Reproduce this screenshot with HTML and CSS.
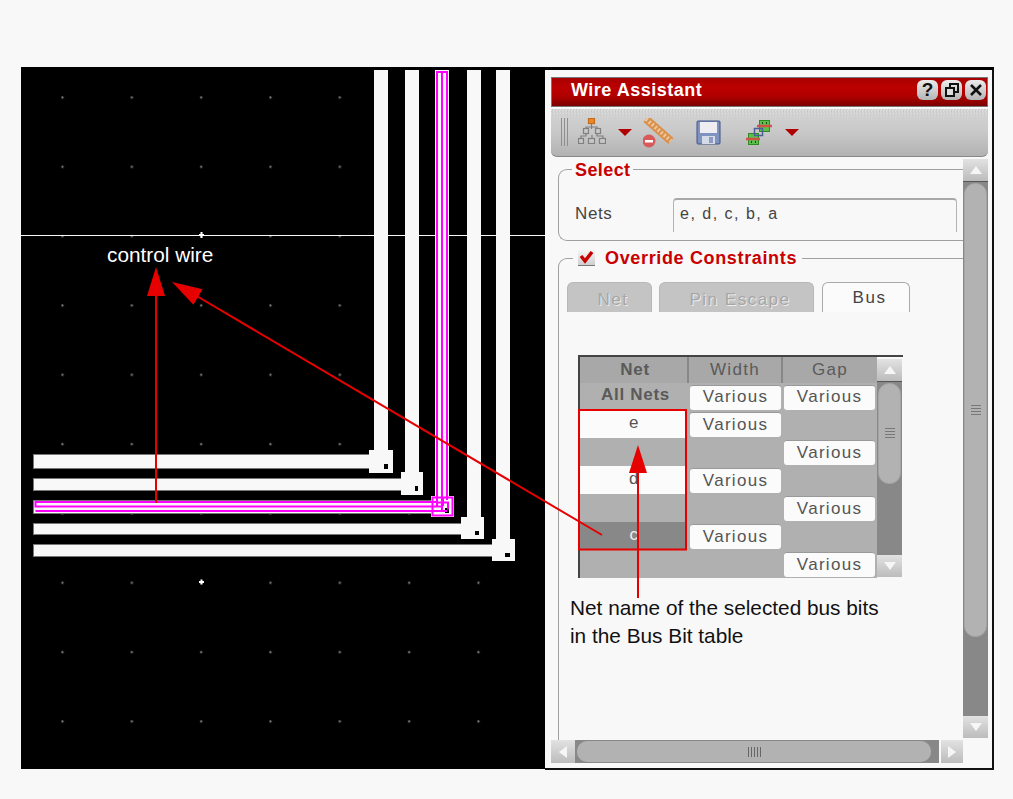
FILE: index.html
```html
<!DOCTYPE html>
<html lang="en">
<head>
  <meta charset="UTF-8" />
  <title>Wire Assistant</title>
  <link rel="stylesheet" href="styles.css">
</head>
<body>
  <div class="figure">
    <div class="canvas">
      <svg width="524" height="699" viewBox="21 70 524 699">
        <defs>
          <pattern id="grid" x="27.5" y="62.5" width="69.33" height="69.33" patternUnits="userSpaceOnUse">
            <rect x="34" y="34" width="2" height="2" fill="#8a8a8a"/>
          </pattern>
        </defs>
        <rect x="21" y="70" width="524" height="699" fill="url(#grid)"/>
        <rect x="21" y="235" width="524" height="1" fill="#f8f8f8"/>
        <path d="M199 235h5M201.500 232v6M199 582h5M201.500 579.500v5" stroke="#fff" stroke-width="2"/>

        <g fill="#f8f8f8" stroke="#777" stroke-width="1">
          <rect x="33.500" y="454.500" width="336" height="14"/>
          <rect x="33.500" y="478.500" width="368" height="12"/>
          <rect x="33.500" y="500.500" width="400" height="13"/>
          <rect x="33.500" y="523.500" width="430" height="11"/>
          <rect x="33.500" y="544.500" width="460" height="12"/>
        </g>
        <g fill="#f8f8f8">
          <rect x="374" y="70" width="14" height="382"/>
          <rect x="405" y="70" width="14" height="404"/>
          <rect x="435" y="70" width="14" height="428"/>
          <rect x="467" y="70" width="14" height="449"/>
          <rect x="496" y="70" width="14" height="471"/>
          <rect x="369" y="450" width="24" height="23"/>
          <rect x="401" y="472" width="22" height="23"/>
          <rect x="431" y="496" width="23" height="21"/>
          <rect x="461" y="517" width="23" height="22"/>
          <rect x="492" y="539" width="23" height="22"/>
        </g>
        <g fill="#000">
          <rect x="384" y="464" width="4" height="5"/>
          <rect x="415" y="486" width="3" height="5"/>
          <rect x="445" y="508" width="4" height="5"/>
          <rect x="475" y="531" width="4" height="4"/>
          <rect x="505" y="553" width="5" height="4"/>
        </g>
        <g fill="none" stroke="#ff00ff" stroke-width="2">
          <path d="M443 506.500H35.500V502H437M35.500 511H447"/>
          <path d="M437 71v435M442 71v439M447 71v429"/>
          <path d="M436 72h12"/>
          <rect x="432.500" y="497.500" width="20" height="18"/>
          <path d="M437 502.500h11v7M443 498v8"/>
        </g>
      </svg>
    </div>

    <div class="window">
      <div class="titlebar">
        <span class="title">Wire Assistant</span>
        <div class="title-buttons">
          <span class="title-btn">?</span>
          <span class="title-btn">
            <svg width="16" height="16" viewBox="0 0 16 16" fill="none" stroke="#111" stroke-width="2"><rect x="6" y="2" width="8" height="8"/><rect x="2" y="6" width="8" height="8" fill="#ddd"/></svg>
          </span>
          <span class="title-btn">
            <svg width="14" height="14" viewBox="0 0 14 14" stroke="#111" stroke-width="2.500"><path d="M2 2l10 10M12 2L2 12"/></svg>
          </span>
        </div>
      </div>

      <div class="toolbar">
        <svg class="ic-grip" width="8" height="28" viewBox="0 0 8 28" stroke="#8f8f8f" stroke-width="1"><path d="M.5 0v28M3.500 0v28M6.500 0v28"/></svg>
        <svg class="ic-tree" width="28" height="26" viewBox="0 0 28 26" fill="#c8c8c8" stroke="#808080" stroke-width="1.200">
          <path d="M13.500 6v5M8 13V9h11v4M3 20v-2h5v-2M14 20v-3M25 20v-2h-6v-2" fill="none"/>
          <rect x="10.500" y=".5" width="6" height="5" fill="#e88a2c" stroke="#c86a1c"/>
          <rect x="5.500" y="10.500" width="5" height="5"/>
          <rect x="17.500" y="10.500" width="5" height="5"/>
          <rect x=".5" y="20.500" width="5" height="5"/>
          <rect x="10.500" y="20.500" width="6" height="5"/>
          <rect x="21.500" y="20.500" width="6" height="5"/>
        </svg>
        <span class="caret caret-a"></span>
        <svg class="ic-ruler" width="30" height="30" viewBox="0 0 30 30">
          <path d="M3 1l25 22" stroke="#d9914e" stroke-width="8"/>
          <path d="M3 1l25 22" stroke="#efc79a" stroke-width="4" stroke-dasharray="2 2"/>
          <circle cx="6" cy="23" r="6.500" fill="#d85a5a"/>
          <rect x="2" y="22" width="8" height="2.500" fill="#fff"/>
        </svg>
        <svg class="ic-save" width="25" height="25" viewBox="0 0 25 25">
          <rect x="1" y="1" width="23" height="23" rx="1" fill="#7f93c0" stroke="#3f5288"/>
          <rect x="4" y="2" width="17" height="11" fill="#eeeef2"/>
          <rect x="6" y="16" width="13" height="8" fill="#d4dae8"/>
          <rect x="13" y="17" width="4" height="6" fill="#8c9cc0"/>
        </svg>
        <svg class="ic-vias" width="26" height="25" viewBox="0 0 26 25">
          <rect x="13.500" y=".5" width="10" height="11" fill="#5cc04a" stroke="#2e8a22"/>
          <rect x="2.500" y="13.500" width="10" height="11" fill="#5cc04a" stroke="#2e8a22"/>
          <rect x="8.500" y="8.500" width="8" height="7" fill="none" stroke="#4a5f9a" stroke-width="1.500"/>
          <path d="M11 6h15M0 19h14" stroke="#d0504a" stroke-width="2.500"/>
          <path d="M16 3h1M20 3h1M5 22h1M9 22h1" stroke="#174d10" stroke-width="2"/>
        </svg>
        <span class="caret caret-b"></span>
      </div>

      <div class="panes">
        <div class="content">
          <fieldset class="group group-select">
            <legend class="legend-select">Select</legend>
            <div class="nets-row">
              <label class="nets-label">Nets</label>
              <div class="nets-input">e, d, c, b, a</div>
            </div>
          </fieldset>

          <fieldset class="group group-override">
            <legend class="legend-override">
              <span class="check">
                <svg width="15" height="13" viewBox="0 0 15 13" fill="none" stroke="#c80000" stroke-width="3.500"><path d="M2 5l4 5 7-9"/></svg>
              </span>
              Override Constraints
            </legend>
            <div class="tabs">
              <span class="tab tab-net">Net</span>
              <span class="tab tab-pin">Pin Escape</span>
              <span class="tab tab-bus">Bus</span>
            </div>

            <div class="bus-table">
              <div class="bus-grid">
                <div class="th th-net">Net</div>
                <div class="th">Width</div>
                <div class="th th-last">Gap</div>

                <div class="cell-all">All Nets</div>
                <div class="cell"><span class="val val-first">Various</span></div>
                <div class="cell"><span class="val val-first">Various</span></div>

                <div class="cell-name">e</div>
                <div class="cell"><span class="val">Various</span></div>
                <div class="cell"></div>

                <div class="cell-name cell-off"></div>
                <div class="cell"></div>
                <div class="cell"><span class="val">Various</span></div>

                <div class="cell-name">d</div>
                <div class="cell"><span class="val">Various</span></div>
                <div class="cell"></div>

                <div class="cell-name cell-off"></div>
                <div class="cell"></div>
                <div class="cell"><span class="val">Various</span></div>

                <div class="cell-name cell-sel">c</div>
                <div class="cell"><span class="val">Various</span></div>
                <div class="cell"></div>

                <div class="cell-name cell-off"></div>
                <div class="cell"></div>
                <div class="cell"><span class="val">Various</span></div>
              </div>
              <div class="vscroll vscroll-table">
                <span class="arrow arrow-up"></span>
                <div class="track"><div class="thumb thumb-table"><i class="grip-h"></i></div></div>
                <span class="arrow arrow-down"></span>
              </div>
            </div>
          </fieldset>
        </div>

        <div class="vscroll vscroll-main">
          <span class="arrow arrow-up"></span>
          <div class="track"><div class="thumb thumb-main"><i class="grip-h"></i></div></div>
          <span class="arrow arrow-down"></span>
        </div>

        <div class="hscroll">
          <span class="arrow arrow-left"></span>
          <div class="htrack"><div class="hthumb"><i class="grip-v"></i></div></div>
          <span class="arrow arrow-right"></span>
        </div>
      </div>
    </div>
  </div>

  <!-- callouts drawn over the figure -->
  <svg class="marks" width="1013" height="799" viewBox="0 0 1013 799">
    <rect x="579" y="410" width="107" height="139.500" fill="none" stroke="#e60000" stroke-width="2"/>
    <path d="M156 503V290M638 598V470M602 535L195 295" stroke="#e60000" stroke-width="2" fill="none"/>
    <path d="M156 267l9 29h-18zM638 445l9 28h-18zM172 282l30.600 7.200-9.200 15.600z" fill="#e60000"/>
  </svg>
  <div class="note note-wire">control wire</div>
  <div class="note note-bits">Net name of the selected bus bits<br>in the Bus Bit table</div>
</body>
</html>
```

FILE: styles.css
```css
html, body {
  margin: 0;
  padding: 0;
}

body {
  position: relative;
  width: 1013px;
  height: 799px;
  overflow: hidden;
  background: #f8f8f8;
  font-family: "Liberation Sans", Arial, sans-serif;
  color: #444;
}

.figure {
  display: flex;
  width: 973px;
  height: 699px;
  margin: 0 0 0 21px;
  position: relative;
  top: 67px;
  border-top: 3px solid #000;
}

.canvas {
  width: 524px;
  height: 699px;
  background: #000;
  flex: none;
}

.canvas svg {
  display: block;
}

.window {
  width: 449px;
  height: 700px;
  box-sizing: border-box;
  padding: 7px 4px 0 6px;
  border-right: 2px solid #111;
  border-bottom: 2px solid #111;
  background: #f8f8f8;
}

/* title bar */
.titlebar {
  display: flex;
  align-items: center;
  justify-content: space-between;
  height: 30px;
  box-sizing: border-box;
  padding: 0 1px 0 19px;
  border: 1px solid #777;
  background: linear-gradient(#a80000, #bc0000 35%, #b00000 65%, #7a0000);
}

.title {
  margin-top: -3px;
  color: #fff;
  font-weight: bold;
  font-size: 18px;
  letter-spacing: 0.5px;
}

.title-buttons {
  display: flex;
  gap: 3px;
}

.title-btn {
  display: flex;
  align-items: center;
  justify-content: center;
  width: 21px;
  height: 20px;
  margin-top: -4px;
  border-radius: 6px;
  background: linear-gradient(#ececec, #b4b4b4);
  color: #111;
  font-size: 19px;
  font-weight: bold;
}

/* toolbar */
.toolbar {
  display: flex;
  align-items: flex-start;
  height: 48px;
  margin-top: 2px;
  box-sizing: border-box;
  padding: 9px 0 0 10px;
  background:
    linear-gradient(rgba(214, 214, 214, 0.45), #cecece 12px, #c8c8c8 50%, #b2b2b2),
    repeating-conic-gradient(#c4c4c4 0 25%, #e8e8e8 0 50%) 0 0 / 3px 3px;
  border-bottom: 1px solid #888;
  border-radius: 0 0 6px 6px;
}

.toolbar svg {
  flex: none;
}

.ic-tree { margin-left: 9px; }
.ic-ruler { margin-left: 11px; }
.ic-save { margin-left: 23px; margin-top: 2px; }
.ic-vias { margin-left: 25px; margin-top: 2px; }

.caret {
  flex: none;
  width: 0;
  height: 0;
  margin-top: 11px;
  border-left: 7px solid transparent;
  border-right: 7px solid transparent;
  border-top: 7px solid #b00000;
}

.caret-a { margin-left: 12px; }
.caret-b { margin-left: 13px; }

/* panes: scrolled content, vertical bar, horizontal bar */
.panes {
  display: grid;
  grid-template-columns: 412px 25px;
  grid-template-rows: 581px 23px;
  margin-top: 2px;
}

.content {
  padding-left: 7px;
  overflow: hidden;
}

.group {
  margin: 0;
  min-width: 0;
  border: 1px solid #a0a0a0;
  border-right: none;
}

.group-select {
  padding: 0 0 8px 16px;
  border-radius: 9px 0 0 9px;
}

.group-override {
  height: 492px;
  box-sizing: border-box;
  margin-top: 7px;
  padding: 0 0 0 8px;
  border-bottom: none;
  border-radius: 9px 0 0 0;
}

legend {
  height: 20px;
  line-height: 23px;
  color: #c80000;
  font-size: 18px;
  font-weight: bold;
  letter-spacing: 0.4px;
}

.legend-select {
  margin-left: -3px;
  padding: 0 3px;
}

.legend-override {
  display: flex;
  align-items: center;
  margin-left: 6px;
  padding: 0 5px;
  letter-spacing: 0.65px;
}

.check {
  display: flex;
  align-items: center;
  justify-content: center;
  width: 17px;
  height: 15px;
  margin-right: 10px;
  background: linear-gradient(#f6f6f6, #cfcfcf);
  border-bottom: 1px solid #777;
}

.nets-row {
  display: flex;
  align-items: center;
  margin-top: 19px;
  font-size: 17px;
  letter-spacing: 0.6px;
}

.nets-label {
  width: 98px;
  margin-top: -2px;
}

.nets-input {
  width: 284px;
  height: 34px;
  box-sizing: border-box;
  padding: 0 0 0 6px;
  line-height: 28px;
  border: 1px solid #b4b4b4;
  border-top: 2px solid #a8a8a8;
  border-bottom: none;
  border-radius: 4px 4px 0 0;
  font-size: 16px;
  letter-spacing: 1.5px;
}

/* tabs */
.tabs {
  display: flex;
  gap: 7px;
  margin-top: 14px;
  font-size: 17px;
  letter-spacing: 1.5px;
}

.tab {
  height: 30px;
  box-sizing: border-box;
  padding-left: 7px;
  line-height: 34px;
  text-align: center;
  border-radius: 6px 6px 0 0;
  background: #c4c4c4;
  color: #a6a6a6;
  text-shadow: 1px 1px 0 #eee;
  border: 1px solid #b8b8b8;
  border-bottom: none;
}

.tab-net { width: 85px; }
.tab-pin { width: 155px; }

.tab-bus {
  width: 88px;
  margin-left: 1px;
  background: #fbfbfb;
  color: #444;
  text-shadow: none;
  border-color: #aaa;
  line-height: 30px;
}

/* bus bit table */
.bus-table {
  display: flex;
  width: 325px;
  height: 223px;
  box-sizing: border-box;
  margin: 43px 0 0 11px;
  border-top: 2px solid #444;
  border-left: 2px solid #444;
  background: #b0b0b0;
  font-size: 17px;
  letter-spacing: 1.3px;
}

.bus-grid {
  display: grid;
  grid-template-columns: 109px 94px 94px;
  grid-template-rows: 26px 27px repeat(6, 28px);
  flex: none;
}

.th {
  line-height: 25px;
  text-align: center;
  border-right: 2px solid #888;
  background: #a8a8a8;
  color: #5a5a5a;
}

.th-net {
  font-weight: bold;
  letter-spacing: 0.7px;
  padding-left: 3px;
}

.th-last {
  border-right: none;
}

.cell-all {
  font-weight: bold;
  letter-spacing: 0.7px;
  color: #5a5a5a;
  line-height: 24px;
  text-align: center;
  padding-left: 2px;
}

.cell {
  display: flex;
  padding: 1px 2px 1px 1px;
}

.val {
  flex: 1;
  height: 25px;
  line-height: 24px;
  margin-top: 1px;
  text-align: center;
  background: #fbfbfb;
  border-top: 1px solid #999;
  border-radius: 3px;
  box-sizing: border-box;
  color: #555;
}

.val-first {
  line-height: 22px;
}

.cell-name {
  margin-right: 2px;
  line-height: 26px;
  padding-left: 2px;
  text-align: center;
  background: #fbfbfb;
  color: #555;
}

.cell-off {
  background: #b0b0b0;
}

.cell-sel {
  background: #888;
  color: #eee;
}

/* scroll bars */
.vscroll {
  display: flex;
  flex-direction: column;
  background: #f8f8f8;
}

.vscroll-main {
  height: 579px;
}

.vscroll-table {
  width: 26px;
  padding: 2px 1px 1px 0;
  box-sizing: border-box;
  height: 221px;
}

.track {
  flex: 1;
  background: #888;
  padding: 1px 1px;
  border-top: 1px solid #555;
}

.thumb {
  display: flex;
  align-items: center;
  justify-content: center;
  box-sizing: border-box;
  background: #b2b2b2;
  border-radius: 11px;
  border: 1px solid #a4a4a4;
}

.thumb-main { height: 454px; }
.thumb-table { height: 101px; }

.arrow {
  display: block;
  flex: none;
  height: 22px;
  background: linear-gradient(#e2e2e2, #bcbcbc);
  position: relative;
}

.arrow::after {
  content: "";
  position: absolute;
  top: 50%;
  left: 50%;
  width: 0;
  height: 0;
  transform: translate(-50%, -50%);
}

.arrow-up::after {
  border-left: 6px solid transparent;
  border-right: 6px solid transparent;
  border-bottom: 8px solid #f6f6f6;
}

.arrow-down::after {
  border-left: 6px solid transparent;
  border-right: 6px solid transparent;
  border-top: 8px solid #f6f6f6;
}

.arrow-left::after {
  border-top: 6px solid transparent;
  border-bottom: 6px solid transparent;
  border-right: 8px solid #f6f6f6;
}

.arrow-right::after {
  border-top: 6px solid transparent;
  border-bottom: 6px solid transparent;
  border-left: 8px solid #f6f6f6;
}

.grip-h {
  display: block;
  width: 10px;
  height: 11px;
  background: repeating-linear-gradient(#777 0 1px, transparent 1px 3px);
}

.grip-v {
  display: block;
  width: 13px;
  height: 10px;
  background: repeating-linear-gradient(90deg, #666 0 1px, transparent 1px 3px);
}

.hscroll {
  display: flex;
  grid-column: 1 / 2;
  height: 23px;
}

.hscroll .arrow {
  width: 24px;
  height: 23px;
}

.hscroll .arrow-right {
  width: 22px;
  margin-left: 2px;
}

.htrack {
  flex: 1;
  padding: 1px 8px 1px 2px;
  background: #888;
}

.hthumb {
  display: flex;
  align-items: center;
  justify-content: center;
  height: 21px;
  background: #b2b2b2;
  border-radius: 10px;
}

/* callouts */
.marks {
  position: absolute;
  top: 0;
  left: 0;
  pointer-events: none;
}

.note {
  position: absolute;
  font-size: 20.8px;
  line-height: 28px;
}

.note-wire {
  top: 241px;
  left: 107px;
  color: #fff;
}

.note-bits {
  top: 594px;
  left: 570px;
  color: #111;
}
```
